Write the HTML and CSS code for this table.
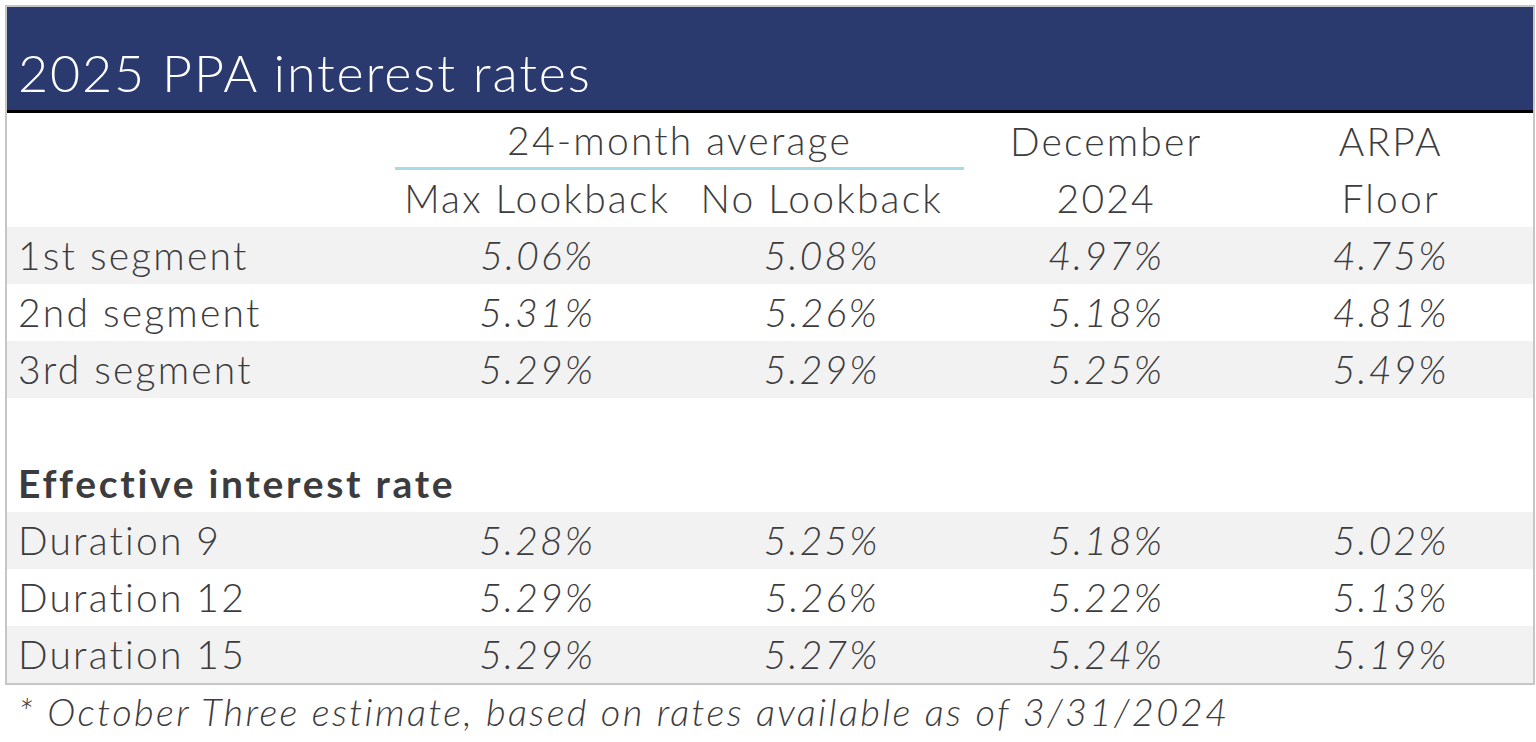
FILE: index.html
```html
<!DOCTYPE html>
<html lang="en">
<head>
<meta charset="utf-8">
<title>2025 PPA interest rates</title>
<link rel="stylesheet" href="styles.css">
</head>
<body>
<div class="card">
  <div class="title-bar"><h1 class="title">2025 PPA interest rates</h1></div>
  <table class="rates">
    <colgroup>
      <col class="c-label"><col class="c-num"><col class="c-num"><col class="c-num"><col class="c-num">
    </colgroup>
    <tr class="hdr">
      <td></td>
      <td colspan="2" class="group"><span class="group-text">24-month average</span></td>
      <td class="ctr">December</td>
      <td class="ctr">ARPA</td>
    </tr>
    <tr class="hdr">
      <td></td>
      <td class="ctr">Max Lookback</td>
      <td class="ctr">No Lookback</td>
      <td class="ctr">2024</td>
      <td class="ctr">Floor</td>
    </tr>
    <tr class="shade">
      <td class="lbl">1st segment</td><td class="num">5.06%</td><td class="num">5.08%</td><td class="num">4.97%</td><td class="num">4.75%</td>
    </tr>
    <tr>
      <td class="lbl">2nd segment</td><td class="num">5.31%</td><td class="num">5.26%</td><td class="num">5.18%</td><td class="num">4.81%</td>
    </tr>
    <tr class="shade">
      <td class="lbl">3rd segment</td><td class="num">5.29%</td><td class="num">5.29%</td><td class="num">5.25%</td><td class="num">5.49%</td>
    </tr>
    <tr>
      <td></td><td></td><td></td><td></td><td></td>
    </tr>
    <tr>
      <td class="lbl bold" colspan="5">Effective interest rate</td>
    </tr>
    <tr class="shade">
      <td class="lbl">Duration 9</td><td class="num">5.28%</td><td class="num">5.25%</td><td class="num">5.18%</td><td class="num">5.02%</td>
    </tr>
    <tr>
      <td class="lbl">Duration 12</td><td class="num">5.29%</td><td class="num">5.26%</td><td class="num">5.22%</td><td class="num">5.13%</td>
    </tr>
    <tr class="shade">
      <td class="lbl">Duration 15</td><td class="num">5.29%</td><td class="num">5.27%</td><td class="num">5.24%</td><td class="num">5.19%</td>
    </tr>
  </table>
</div>
<p class="note">* October Three estimate, based on rates available as of 3/31/2024</p>
</body>
</html>
```
FILE: styles.css
```css
html, body {
  margin: 0;
  padding: 0;
  background: #ffffff;
}
body {
  font-family: Lato, "Noto Sans", "Liberation Sans", sans-serif;
  font-weight: 300;
  color: #3c3c3e;
  padding: 5px 0 0 5px;
}
.card {
  width: 1526px;
  border: 2px solid #c6c6c6;
  background: #ffffff;
}
.title-bar {
  background: #2b3a6e;
  height: 103px;
  border-bottom: 3px solid #000000;
  display: flex;
  align-items: flex-end;
  padding-left: 11px;
}
.title {
  margin: 0 0 8px 0;
  font-weight: 300;
  font-size: 52px;
  line-height: 60px;
  color: #ffffff;
  letter-spacing: 1.85px;
}
.rates {
  width: 1526px;
  border-collapse: collapse;
  table-layout: fixed;
}
.c-label { width: 388px; }
.c-num { width: 284.5px; }
.rates td {
  height: 57px;
  padding: 0;
  font-size: 39px;
  line-height: 57px;
  white-space: nowrap;
  letter-spacing: 2.2px;
}
.rates tr.shade td {
  background: #f2f2f2;
}
.lbl {
  padding-left: 11px !important;
  text-align: left;
}
.bold {
  font-weight: 700;
  letter-spacing: 2.7px !important;
}
.ctr {
  text-align: center;
}
.num {
  text-align: center;
  font-style: italic;
}
.group {
  text-align: center;
  vertical-align: bottom;
}
.group-text {
  display: block;
  border-bottom: 3px solid #a9dbe2;
  line-height: 54px;
}
.note {
  margin: 0;
  padding: 4px 0 0 13px;
  font-size: 38px;
  line-height: 44px;
  font-style: italic;
  letter-spacing: 2.4px;
}
```
